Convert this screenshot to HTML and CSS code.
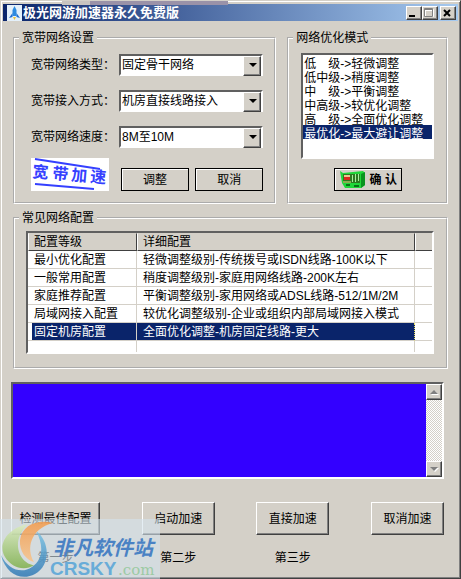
FILE: index.html
```html
<!DOCTYPE html>
<html lang="zh-CN">
<head>
    <meta charset="UTF-8">
    <title>极光网游加速器永久免费版</title>
    <link rel="stylesheet" href="styles.css">
</head>
<body>
    <div class="window">
        <div class="title-bar">
            <svg class="app-icon" width="15" height="16" viewBox="0 0 15 16">
                <rect width="15" height="16" fill="#e4f0fa"/>
                <path d="M7.5 1 L9.5 5 L9.5 11 L5.5 11 L5.5 5 Z" fill="#2d8be0"/>
                <path d="M5.5 8 L2 13 L5.5 12 Z M9.5 8 L13 13 L9.5 12 Z" fill="#1f6fd0"/>
                <path d="M6 12 L9 12 L7.5 15 Z" fill="#e8c23a"/>
            </svg>
            <h1 class="title">极光网游加速器永久免费版</h1>
            <div class="title-buttons">
                <button class="title-button" aria-label="最小化"><svg width="12" height="10"><rect x="2" y="7" width="6" height="2" fill="#000"/></svg></button>
                <button class="title-button" aria-label="最大化" disabled><svg width="12" height="10"><path d="M2.5 1.5h8v7h-8zM2.5 2.5h8" fill="none" stroke="#fff"/><path d="M1.5 .5h8v8h-8zM1.5 1.5h8" fill="none" stroke="#808080"/></svg></button>
                <button class="title-button close" aria-label="关闭"><svg width="12" height="10"><path d="M3 2l6 6M9 2l-6 6" stroke="#000" stroke-width="2"/></svg></button>
            </div>
        </div>
        <div class="fragment"></div>

        <div class="groups">
            <fieldset class="group settings">
                <legend>宽带网络设置</legend>
                <div class="field">
                    <label for="netType">宽带网络类型：</label>
                    <span class="combo"><select id="netType"><option>固定骨干网络</option></select></span>
                </div>
                <div class="field">
                    <label for="access">宽带接入方式：</label>
                    <span class="combo"><select id="access"><option>机房直接线路接入</option></select></span>
                </div>
                <div class="field">
                    <label for="speed">宽带网络速度：</label>
                    <span class="combo"><select id="speed"><option>8M至10M</option></select></span>
                </div>
                <div class="actions">
                    <svg class="speed-logo" width="78" height="33" viewBox="0 0 78 33">
                        <rect width="78" height="33" fill="#fff"/>
                        <path d="M4 1L69 11M4 26L63 31" stroke="#3540ff" stroke-width="2"/>
                        <text x="1 21 40 59" y="19" transform="rotate(5 1 19)">宽带加速</text>
                    </svg>
                    <button class="flat-button">调整</button>
                    <button class="flat-button">取消</button>
                </div>
            </fieldset>

            <fieldset class="group mode">
                <legend>网络优化模式</legend>
                <select class="mode-list" size="6" aria-label="网络优化模式">
                    <option>低　级-&gt;轻微调整</option>
                    <option>低中级-&gt;稍度调整</option>
                    <option>中　级-&gt;平衡调整</option>
                    <option>中高级-&gt;较优化调整</option>
                    <option>高　级-&gt;全面优化调整</option>
                    <option selected>最优化-&gt;最大避让调整</option>
                </select>
                <button class="flat-button confirm">
                    <svg width="27" height="19" viewBox="0 0 27 19">
                        <path d="M1 1L4 3L24 1L26 3V15L22 18H6L3 13Z" fill="#20d83a"/>
                        <path d="M22 4L26 2V15L22 18Z" fill="#0a9420"/>
                        <rect x="4" y="4" width="17" height="9" fill="#2c7a22"/>
                        <rect x="5" y="5" width="6" height="2" fill="#e8c890"/>
                        <rect x="5" y="7" width="6" height="3" fill="#d8281e"/>
                        <path d="M13.5 5v7M16.5 4v8M19.5 4v7" stroke="#a8f0a0"/>
                        <path d="M4 12H12" stroke="#e8e080"/>
                        <path d="M7 15H11M15 16H20" stroke="#0a7018" stroke-width="2"/>
                    </svg>
                    <b>确 认</b>
                </button>
            </fieldset>

            <fieldset class="group common">
                <legend>常见网络配置</legend>
                <div class="table-frame">
                    <table class="config-table">
                        <thead>
                            <tr><th class="level">配置等级</th><th>详细配置</th><th class="rest"></th></tr>
                        </thead>
                        <tbody>
                            <tr><td>最小优化配置</td><td>轻微调整级别-传统拨号或ISDN线路-100K以下</td><td></td></tr>
                            <tr><td>一般常用配置</td><td>稍度调整级别-家庭用网络线路-200K左右</td><td></td></tr>
                            <tr><td>家庭推荐配置</td><td>平衡调整级别-家用网络或ADSL线路-512/1M/2M</td><td></td></tr>
                            <tr><td>局域网接入配置</td><td>较优化调整级别-企业或组织内部局域网接入模式</td><td></td></tr>
                            <tr class="selected"><td>固定机房配置</td><td>全面优化调整-机房固定线路-更大</td><td></td></tr>
                            <tr class="blank"><td></td><td></td><td></td></tr>
                        </tbody>
                    </table>
                </div>
            </fieldset>
        </div>

        <div class="lower">
            <div class="output">
                <textarea class="log" aria-label="输出" readonly></textarea>
                <div class="scrollbar">
                    <button class="scroll-button" aria-label="向上" disabled><svg width="12" height="12"><path d="M3 9h8L7 5z" fill="#fff"/><path d="M2 8h8L6 4z" fill="#808080"/></svg></button>
                    <button class="scroll-button" aria-label="向下" disabled><svg width="12" height="12"><path d="M3 5h8L7 9z" fill="#fff"/><path d="M2 4h8L6 8z" fill="#808080"/></svg></button>
                </div>
            </div>
            <div class="steps">
                <div class="step"><button class="push-button wide">检测最佳配置</button><span>第一步</span></div>
                <div class="step"><button class="push-button">启动加速</button><span>第二步</span></div>
                <div class="step"><button class="push-button">直接加速</button><span>第三步</span></div>
                <div class="step"><button class="push-button">取消加速</button></div>
            </div>
        </div>

        <svg class="watermark" width="160" height="60" viewBox="0 0 160 60">
            <defs>
                <linearGradient id="green" x1="0" y1="0" x2="0" y2="1">
                    <stop offset="0" stop-color="#dcecc0"/>
                    <stop offset="1" stop-color="#7fb04c"/>
                </linearGradient>
                <linearGradient id="orange" x1="0" y1="0" x2="0" y2="1">
                    <stop offset="0" stop-color="#f39a4a"/>
                    <stop offset="1" stop-color="#f7c48c"/>
                </linearGradient>
                <linearGradient id="blue" x1="0" y1="0" x2="0" y2="1">
                    <stop offset="0" stop-color="#7cc4e4"/>
                    <stop offset="1" stop-color="#2f78b4"/>
                </linearGradient>
            </defs>
            <rect width="160" height="60" fill="#d3e2ec" fill-opacity=".6"/>
            <path d="M36 12C50 22 51 46 35 55C22 62 6 56 1 36C8 51 22 55 32 48C43 41 44 26 36 12Z" fill="url(#blue)" fill-opacity=".85"/>
            <path d="M28 5C8 9 -3 25 5 38C11 48 24 53 34 46C22 46 8 24 28 5Z" fill="url(#green)" fill-opacity=".85"/>
            <path d="M53 4C38 0 22 6 20 21C19 32 26 41 34 43C26 30 30 10 53 4Z" fill="url(#orange)" fill-opacity=".85"/>
            <text class="mark-name" x="53" y="36">非凡软件站</text>
            <text class="mark-site" x="50" y="56">CRSKY</text>
            <text class="mark-com" x="118" y="56">.com</text>
        </svg>
    </div>
</body>
</html>
```

FILE: styles.css
```css
* {
    box-sizing: border-box;
}

body {
    margin: 0;
    background: #d4d0c8;
}

body,
button,
select,
textarea {
    font-family: "Liberation Sans", "Noto Sans CJK SC", sans-serif;
    font-size: 12px;
    line-height: 16px;
    color: #000;
}

.window {
    position: relative;
    min-height: 100vh;
    padding: 3px 1px 11px;
    background: #d4d0c8;
    border: 1px solid #d4d0c8;
    border-right-color: #404040;
    border-bottom-color: #404040;
    box-shadow: inset 1px 1px #fff, inset -1px -1px #808080;
}

.title-bar {
    display: flex;
    align-items: center;
    height: 17px;
    margin: 0 1px;
    padding: 0 2px 0 4px;
    background: linear-gradient(to right, #0a246a, #a6caf0);
}

.title {
    flex: 1;
    margin: 0 0 0 1px;
    font-size: 13px;
    line-height: 16px;
    font-weight: bold;
    color: #fff;
}

.title-buttons {
    display: flex;
}

.title-button {
    width: 16px;
    height: 14px;
    padding: 0;
    background: #d4d0c8;
    border: 1px solid;
    border-color: #fff #404040 #404040 #fff;
    box-shadow: inset -1px -1px #808080;
}

.title-button.close {
    margin-left: 2px;
}

.title-button svg,
.scroll-button svg {
    display: block;
}

/* piece of the window behind */
.fragment {
    position: absolute;
    top: 0;
    left: 61px;
    width: 166px;
    height: 4px;
    background: linear-gradient(to right, #c8c4c0 28px, #9a92a8 28px);
}

.groups {
    display: grid;
    grid-template-columns: 18fr 11fr;
    gap: 6px 11px;
    padding: 9px 11px 0;
}

.group {
    min-width: 0;
    margin: 0;
    padding: 8px 11px 11px 16px;
    border: 2px groove #fff;
}

.group legend {
    margin-left: -12px;
    padding: 0 3px;
}

.field {
    display: flex;
    align-items: center;
    height: 21px;
    margin-bottom: 15px;
}

.field label {
    width: 88px;
}

.combo {
    position: relative;
    flex: 1;
}

.combo select {
    display: block;
    width: 100%;
    height: 22px;
    padding: 0 18px 0 1px;
    appearance: none;
    background: #fff;
    border: 2px solid;
    border-color: #606060 #fff #fff #606060;
    border-radius: 0;
}

/* drop-down arrow */
.combo::before {
    content: "";
    position: absolute;
    top: 2px;
    right: 2px;
    width: 16px;
    height: 18px;
    background: #d4d0c8;
    border: 1px solid;
    border-color: #fff #404040 #404040 #fff;
    box-shadow: inset -1px -1px #808080;
    pointer-events: none;
}

.combo::after {
    content: "";
    position: absolute;
    top: 9px;
    right: 6px;
    border: 4px solid transparent;
    border-top-color: #000;
    border-bottom: 0;
    pointer-events: none;
}

.actions {
    display: flex;
    align-items: flex-end;
    gap: 6px;
    margin-top: -4px;
}

.speed-logo {
    flex: none;
    margin-right: 6px;
}

.speed-logo text {
    font-size: 16px;
    font-weight: bold;
    fill: #3540ff;
}

.flat-button {
    flex: 1;
    height: 23px;
    padding: 0;
    background: #d4d0c8;
    border: 1px solid #000;
    box-shadow: inset 1px 1px #fff;
}

.mode {
    display: flex;
    flex-direction: column;
    align-items: center;
    gap: 9px;
    padding: 7px 12px 11px;
}

.group.mode legend {
    margin-left: -8px;
}

.group.common legend {
    margin-left: -7px;
}

.mode-list {
    width: 100%;
    height: 106px;
    padding: 0;
    background: #fff;
    border: 2px solid;
    border-color: #606060 #fff #fff #606060;
    border-radius: 0;
    overflow: hidden;
}

.mode-list option {
    display: flex;
    align-items: center;
    min-height: 14px;
    height: 14px;
    padding: 0 1px;
    line-height: 14px;
}

.mode-list option:checked {
    background: #0a246a linear-gradient(#0a246a, #0a246a);
    color: #fff;
}

.confirm {
    display: flex;
    flex: none;
    align-items: center;
    gap: 4px;
    width: 68px;
    padding: 0 4px;
    white-space: nowrap;
}

.confirm svg {
    flex: none;
}

.group.common {
    grid-column: 1 / -1;
    padding: 5px 12px 13px 11px;
}

.table-frame {
    border: 2px solid;
    border-color: #606060 #fff #fff #606060;
}

.config-table {
    width: 100%;
    table-layout: fixed;
    border-collapse: separate;
    border-spacing: 0;
    background: #fff;
}

.config-table th {
    height: 18px;
    padding: 0 5px;
    text-align: left;
    font-weight: normal;
    background: #d4d0c8;
    border: 1px solid;
    border-color: #d4d0c8 #404040 #404040 #fff;
}

.config-table .level {
    width: 109px;
}

.config-table .rest {
    width: 17px;
    border-right: 0;
}

.config-table td {
    height: 18px;
    padding: 1px 6px 0;
    line-height: 16px;
    white-space: nowrap;
    border-right: 1px solid #d4d0c8;
    border-bottom: 1px solid #d4d0c8;
}

.config-table td:last-child {
    border-right: 0;
}

.config-table .blank td {
    height: 11px;
    border-bottom: 0;
}

.selected td {
    color: #fff;
    background: #0a246a;
}

.selected td:nth-child(1) {
    background: linear-gradient(#0a246a, #0a246a) 4px 0 no-repeat;
}

.selected td:nth-child(2) {
    border-right: 1px dotted #e8e060;
}

.selected td:nth-child(3) {
    background: #fff;
}

.lower {
    padding: 13px 15px 0 9px;
}

.output {
    display: flex;
    height: 97px;
    border: 2px solid;
    border-color: #606060 #fff #fff #606060;
}

.log {
    flex: 1;
    min-width: 0;
    padding: 2px;
    background: #3300ff;
    color: #fff;
    border: 0;
    resize: none;
}

.scrollbar {
    display: flex;
    flex-direction: column;
    justify-content: space-between;
    width: 16px;
    background: repeating-conic-gradient(#fff 0 25%, #d4d0c8 0 50%) 0 0 / 2px 2px;
}

.scroll-button {
    width: 16px;
    height: 16px;
    padding: 1px;
    background: #d4d0c8;
    border: 1px solid;
    border-color: #fff #404040 #404040 #fff;
    box-shadow: inset -1px -1px #808080;
}

.steps {
    display: flex;
    justify-content: space-between;
    margin-top: 23px;
}

.step {
    display: flex;
    flex-direction: column;
    align-items: center;
    gap: 15px;
}

.push-button {
    width: 73px;
    height: 33px;
    padding: 0;
    background: #d4d0c8;
    border: 1px solid;
    border-color: #fff #404040 #404040 #fff;
    box-shadow: inset -1px -1px #808080;
}

.push-button.wide {
    width: 89px;
}

.watermark {
    position: absolute;
    left: -1px;
    bottom: -1px;
}

.mark-name {
    font-size: 20px;
    font-weight: bold;
    font-style: italic;
    fill: #4a82c4;
}

.mark-site {
    font-family: "Liberation Sans", sans-serif;
    font-size: 19px;
    font-weight: bold;
    fill: #68acd8;
}

.mark-com {
    font-family: "DejaVu Serif", serif;
    font-size: 15px;
    fill: #9ccaa4;
}
```
